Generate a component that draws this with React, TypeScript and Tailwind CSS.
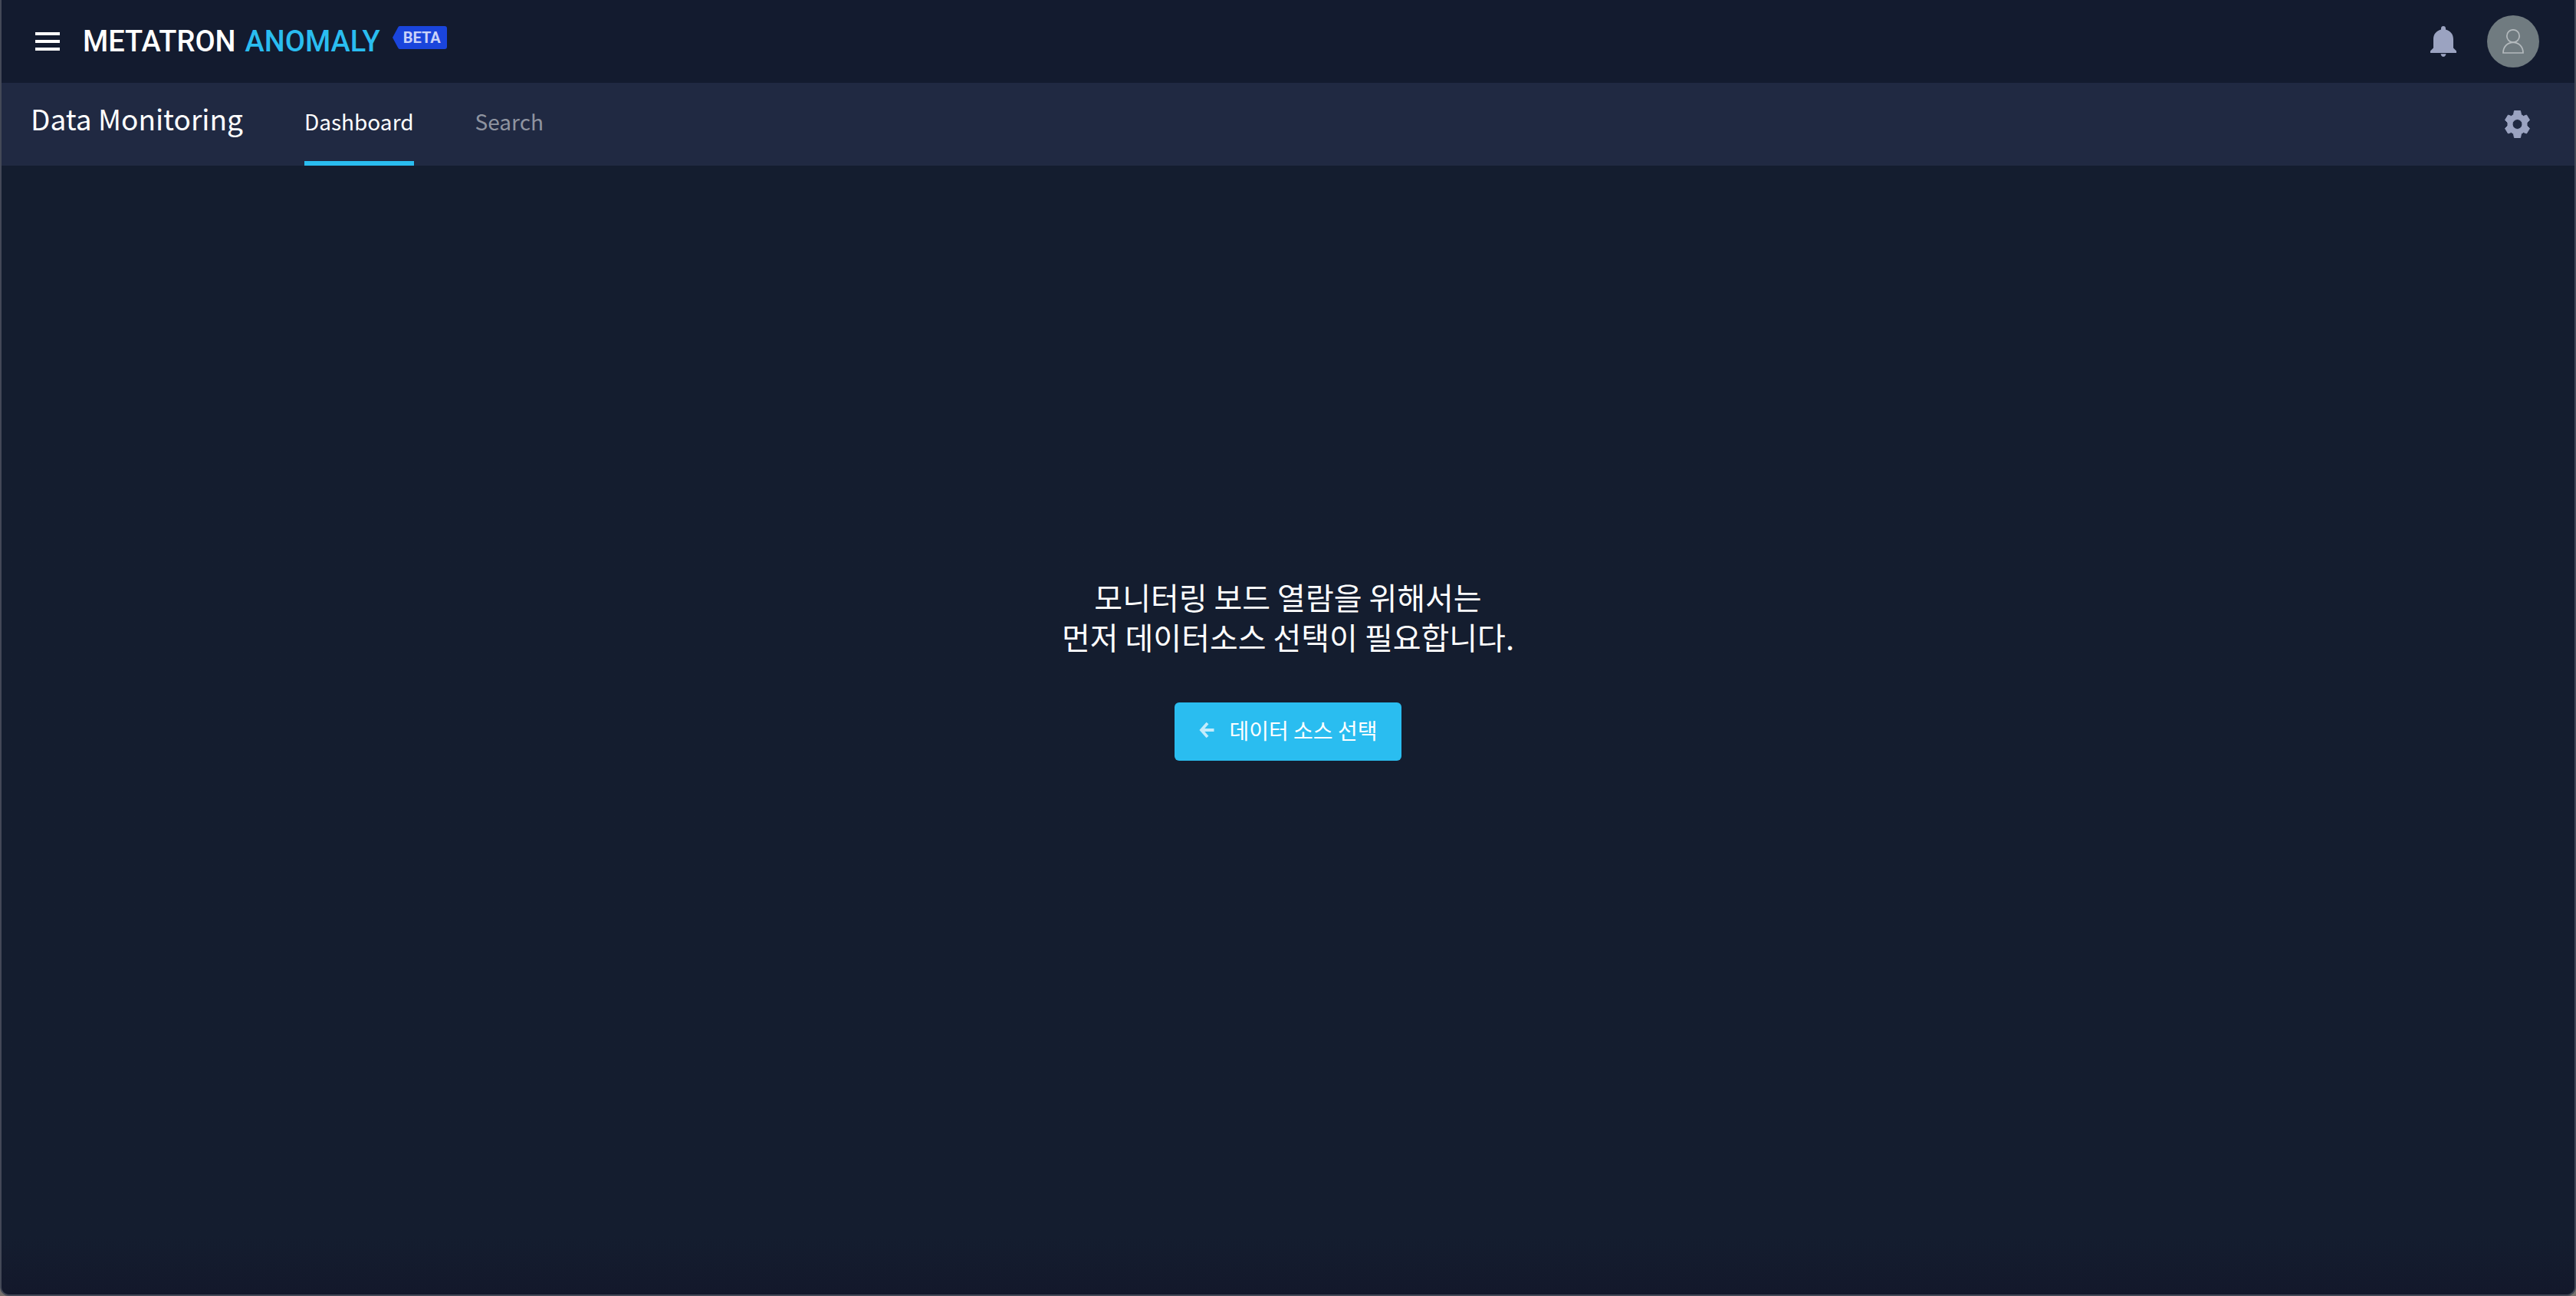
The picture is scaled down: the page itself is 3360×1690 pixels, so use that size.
import React from "react";

function MenuIcon() {
  return (
    <svg viewBox="0 0 32 24" className="h-6 w-8" fill="currentColor" aria-hidden="true">
      <path d="M0 0h32v4H0zM0 10h32v4H0zM0 20h32v4H0z" />
    </svg>
  );
}

function BellIcon() {
  return (
    <svg viewBox="0 0 34 40" className="h-10 w-[34px]" fill="currentColor" aria-hidden="true">
      <path d="M17 0c1.800 0 3 1.200 3 3v1.500C26 6 30 10.500 30 17v11.500l4 4V35H0v-2.500l4-4V17C4 10.500 8 6 14 4.500V3c0-1.800 1.200-3 3-3z" />
      <path d="M13.500 36.300h7c-.4 2.300-1.700 3.700-3.500 3.700s-3.100-1.400-3.500-3.700z" />
    </svg>
  );
}

function UserIcon() {
  return (
    <svg viewBox="0 0 28 32" className="h-8 w-7" fill="none" stroke="currentColor" strokeWidth="1.700" aria-hidden="true">
      <circle cx="14" cy="9" r="8.200" />
      <path d="M1 31c0-8 5.500-13.700 13-13.700S27 23 27 31z" />
    </svg>
  );
}

function GearIcon() {
  return (
    <svg viewBox="-0.500 -0.500 33 36" className="h-9 w-[33px]" fill="currentColor" stroke="currentColor" strokeLinejoin="round" aria-hidden="true">
      <path
        fillRule="evenodd"
        d="M12 0h8l1 5 3 2 4-1.500 4 6.500-3.500 3.500v4L32 23l-4 6.500-4-1.500-3 2-1 5h-8l-1-5-3-2-4 1.500L0 23l3.500-3.500v-4L0 12l4-6.500L8 7l3-2zM16 11a6.500 6.500 0 1 0 0 13 6.500 6.500 0 0 0 0-13z"
      />
    </svg>
  );
}

function ArrowLeftIcon() {
  return (
    <svg viewBox="0 0 20 22" className="h-[22px] w-5" fill="none" stroke="currentColor" strokeWidth="3.800" aria-hidden="true">
      <path d="M11 2 3 11l8 9M3 11h16.500" />
    </svg>
  );
}

function Logo() {
  return (
    <a href="#" className="flex items-center gap-4" aria-label="Metatron Anomaly Beta">
      <span className="flex gap-3 font-['Roboto',sans-serif] text-[38px] leading-10 font-medium">
        <span className="text-white">METATRON</span>
        <span className="text-[#2abdf0]">ANOMALY</span>
      </span>
      <span className="relative mb-2.5 flex h-[30px] w-[71px] items-center pl-3.5 font-['Roboto',sans-serif] text-xl font-bold text-[#c9d2f8]">
        <svg viewBox="0 0 71 30" className="absolute inset-0 size-full" fill="#1a45dc" aria-hidden="true">
          <path d="M10 0h58a3 3 0 0 1 3 3v24a3 3 0 0 1-3 3H10a3 3 0 0 1-3-2L0 15 7 2a3 3 0 0 1 3-2z" />
        </svg>
        <span className="relative">BETA</span>
      </span>
    </a>
  );
}

export default function App() {
  return (
    <div className="bg-[#77716d]">
      <div className="flex min-h-screen flex-col overflow-hidden rounded-b-xl border-x-2 border-b-2 border-[#434857] bg-[#141d2f] font-['Noto_Sans_CJK_KR',sans-serif] text-white">
        <header className="flex h-[108px] items-center justify-between bg-[#131b2f] pr-[46px] pl-11">
          <div className="flex items-center gap-[30px]">
            <button type="button" aria-label="Menu"><MenuIcon /></button>
            <Logo />
          </div>
          <div className="flex items-center gap-10">
            <button type="button" aria-label="Notifications" className="text-[#9ba3c1]"><BellIcon /></button>
            <button type="button" aria-label="Account" className="flex size-[68px] items-center justify-center rounded-full bg-[#707b80] text-[#b4babd]">
              <UserIcon />
            </button>
          </div>
        </header>
        <nav className="flex h-[108px] items-stretch justify-between bg-[#202942] pr-[58px] pl-[38px]">
          <div className="flex items-stretch gap-20">
            <h1 className="pt-4 text-[37px] leading-[60px]">Data Monitoring</h1>
            <div className="flex items-stretch gap-20 text-[28px] leading-[40px]">
              <a href="#dashboard" aria-current="page" className="flex items-center border-b-6 border-[#2abdf0] pb-0.5">Dashboard</a>
              <a href="#search" className="flex items-center border-b-6 border-transparent pb-0.5 text-[#8f94a0]">Search</a>
            </div>
          </div>
          <button type="button" aria-label="Settings" className="text-[#9ba3c1]"><GearIcon /></button>
        </nav>
        <main className="flex grow flex-col items-center justify-center bg-linear-to-b from-[#141d2f] from-95% to-[#13182b] pb-[160px]">
          <p className="text-center text-[40px] leading-[52px]">
            모니터링 보드 열람을 위해서는
            <br />
            먼저 데이터소스 선택이 필요합니다.
          </p>
          <button type="button" className="mt-[60px] flex h-[76px] items-center gap-5 rounded-md bg-[#2abdf0] px-8 pb-1 text-[28px] leading-10">
            <span className="text-[#c4ecfb]"><ArrowLeftIcon /></span>
            데이터 소스 선택
          </button>
        </main>
      </div>
    </div>
  );
}
